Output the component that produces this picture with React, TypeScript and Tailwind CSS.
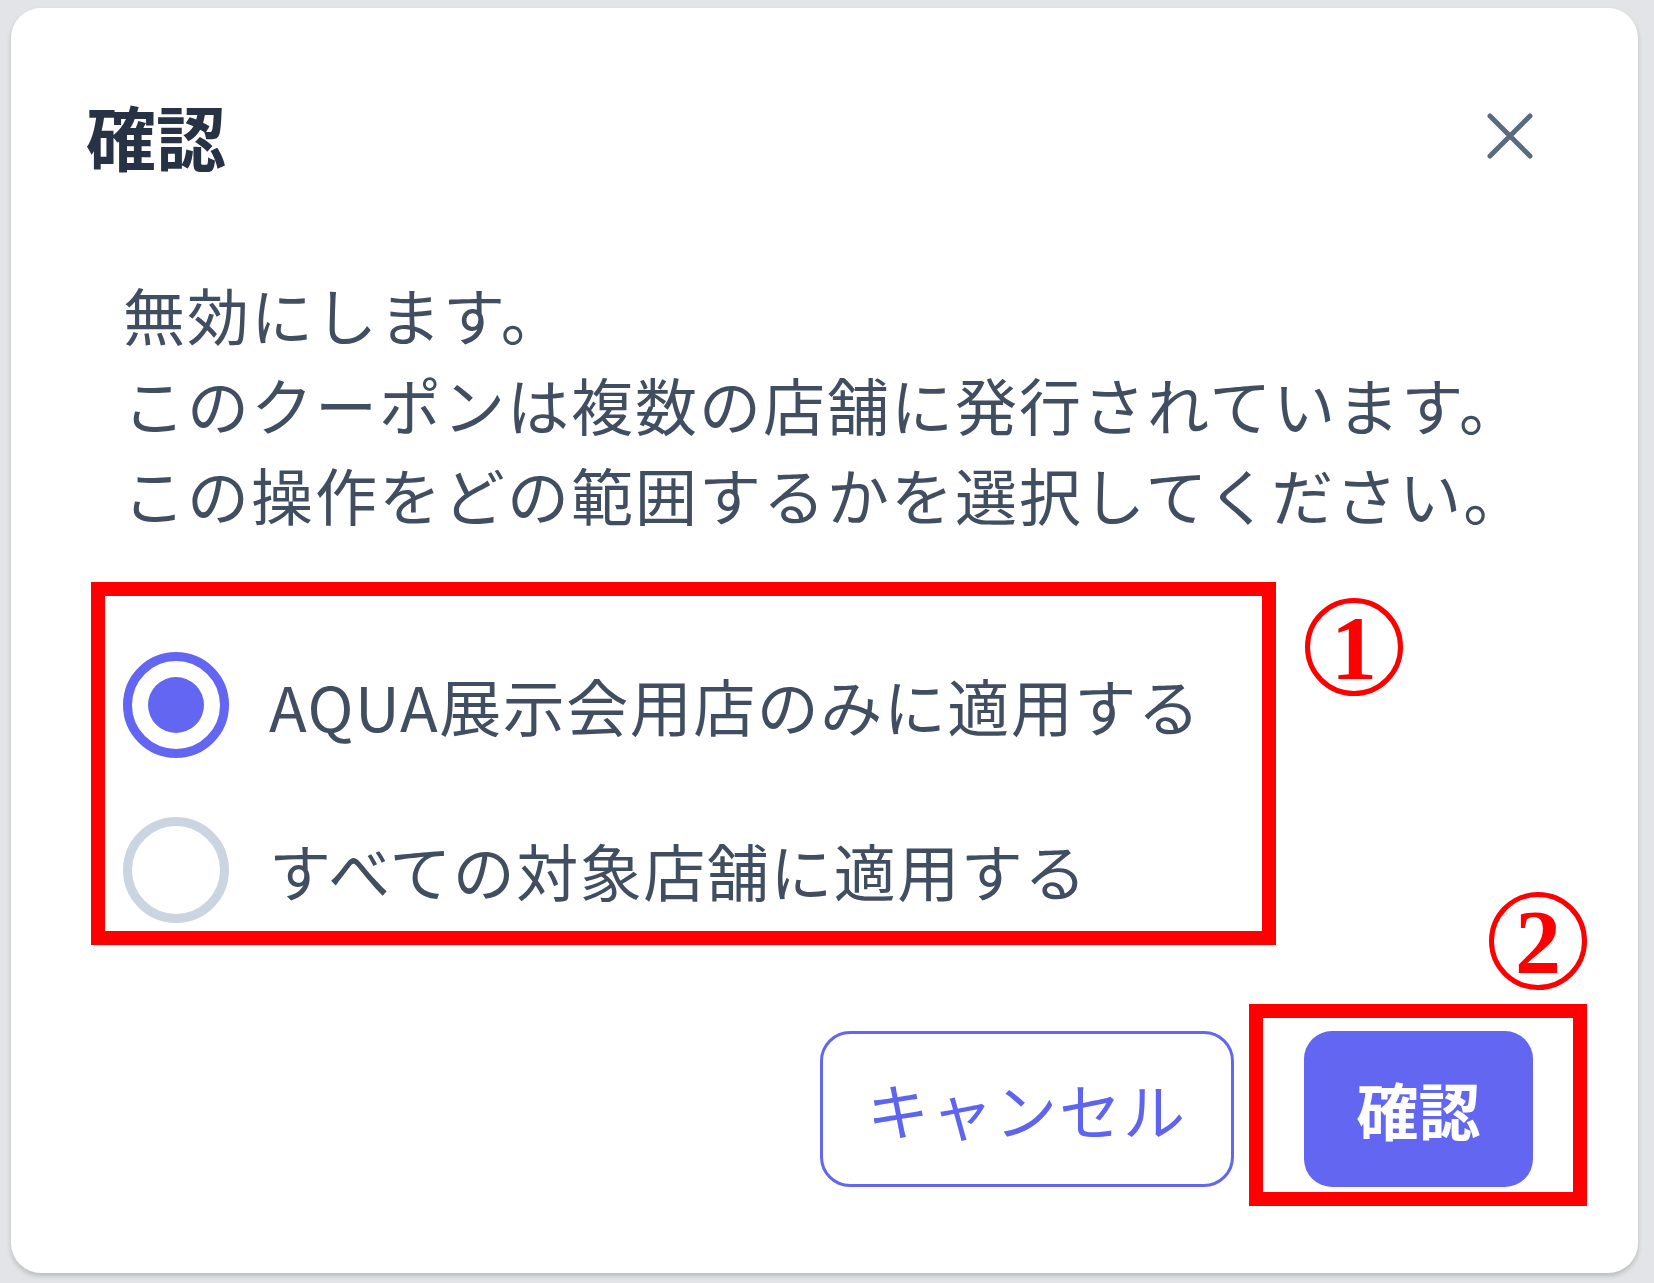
import { useState } from "react";

const OPTIONS = [
  { id: "single", label: "AQUA展示会用店のみに適用する" },
  { id: "all", label: "すべての対象店舗に適用する" },
];

const FONT = { fontFamily: '"Noto Sans CJK JP", "Noto Sans", sans-serif' };

// red circled number used as an annotation marker
function Marker({ n, className }: { n: string; className: string }) {
  return (
    <div
      className={`absolute w-[98px] h-[98px] rounded-full border-[5px] border-[#ff0000] flex items-center justify-center ${className}`}
    >
      <span
        className="text-[#ff0000] text-[92px] font-bold leading-none mt-[2px]"
        style={{ fontFamily: '"Liberation Serif", serif' }}
      >
        {n}
      </span>
    </div>
  );
}

export default function App() {
  const [scope, setScope] = useState("single");

  return (
    <div className="w-[1654px] h-[1283px] bg-[#e2e4e8] pt-[8px] pl-[11px]" style={FONT}>
      <div className="w-[1627px] h-[1265px] bg-white rounded-[30px] shadow-[0_3px_5px_rgba(0,0,0,0.18)] flex flex-col">
        {/* header */}
        <div className="flex items-center justify-between pt-[93px] pl-[75px] pr-[104px] h-[163px]">
          <h2 className="text-[70px] leading-[70px] font-bold text-[#283245]">確認</h2>
          <button aria-label="閉じる" className="w-[48px] h-[48px] flex items-center justify-center">
            <svg viewBox="0 0 48 48" className="w-[48px] h-[48px]" fill="none" stroke="#5a6a7f" strokeWidth="5" strokeLinecap="round">
              <path d="M4 4L44 44M44 4L4 44" />
            </svg>
          </button>
        </div>

        {/* message */}
        <div className="mt-[98px] pl-[112px] text-[62px] leading-[90px] tracking-[2px] text-[#414e61]">
          <p>無効にします。</p>
          <p>このクーポンは複数の店舗に発行されています。</p>
          <p>この操作をどの範囲するかを選択してください。</p>
        </div>

        {/* options (annotated ①) */}
        <div className="relative mt-[43px] ml-[80px] w-[1185px] h-[363px] border-[14px] border-[#ff0000] pt-[56px] pl-[18px] flex flex-col gap-[59px]">
          {OPTIONS.map((o) => {
            const on = scope === o.id;
            return (
              <label key={o.id} className="flex items-center gap-[40px] h-[106px] cursor-pointer" onClick={() => setScope(o.id)}>
                <span
                  className={`w-[106px] h-[106px] rounded-full border-[9px] flex items-center justify-center shrink-0 ${
                    on ? "border-[#6366f1]" : "border-[#cbd5e1]"
                  }`}
                >
                  {on && <span className="w-[56px] h-[56px] rounded-full bg-[#6366f1]" />}
                </span>
                <span className="text-[62px] leading-none tracking-[1.5px] text-[#414e61]">{o.label}</span>
              </label>
            );
          })}
          <Marker n="1" className="left-[1200px] top-[2px]" />
        </div>

        {/* footer (annotated ②) */}
        <div className="mt-[59px] flex justify-end items-start pr-[51px]">
          <button className="mt-[27px] mr-[15px] w-[414px] h-[156px] rounded-[30px] border-[3px] border-[#6366f1] bg-white text-[62px] tracking-[2px] text-[#5f64ef] leading-none">
            キャンセル
          </button>
          <div className="relative w-[338px] h-[202px] border-[14px] border-[#ff0000] pt-[13px] pl-[41px]">
            <button className="w-[229px] h-[156px] rounded-[28px] bg-[#6366f1] text-white text-[62px] font-bold leading-none">
              確認
            </button>
            <Marker n="2" className="left-[226px] top-[-126px]" />
          </div>
        </div>
      </div>
    </div>
  );
}
